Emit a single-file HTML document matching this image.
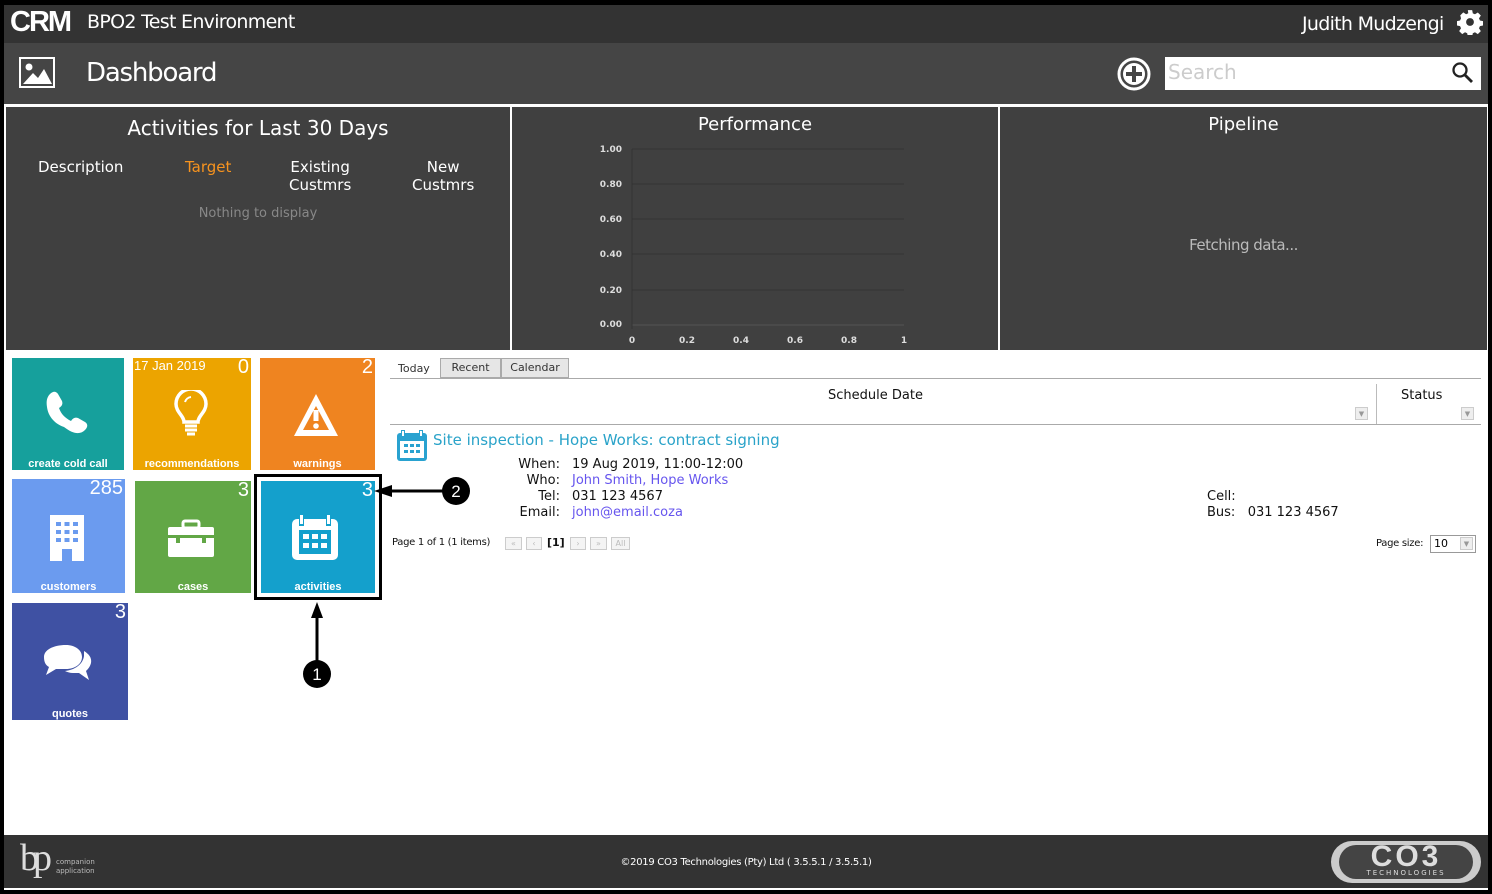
<!DOCTYPE html>
<html><head><meta charset="utf-8"><style>
*{margin:0;padding:0;box-sizing:border-box}
body{width:1492px;height:894px;background:#fff;position:relative;overflow:hidden;font-family:"DejaVu Sans","Liberation Sans",sans-serif}
.a{position:absolute}
.frame{left:0;top:0;width:1492px;height:894px;border:4px solid #000;border-top-width:5px}
.t{color:#fff;white-space:nowrap}
.tile{position:absolute;color:#fff;font-family:"Liberation Sans",sans-serif}
.tile .n{position:absolute;right:2px;top:-2px;font-size:20px}
.tile .l{position:absolute;left:0;right:0;bottom:0;text-align:center;font-size:11px;font-weight:bold}
.tile svg{position:absolute}
.yl{position:absolute;left:590px;width:32px;text-align:right;font-size:9px;color:#ddd;font-weight:bold}
.xl{position:absolute;top:335px;font-size:9px;color:#ddd;font-weight:bold;width:20px;text-align:center}
.pb{position:absolute;top:537px;height:13px;border:1px solid #ccc;background:#f4f4f4;font-size:8px;color:#bbb;text-align:center;line-height:11px}
.dd{position:absolute;width:13px;height:13px;border:1px solid #ccc;background:#eee;font-size:7px;color:#999;text-align:center;line-height:12px}
</style></head><body>
<div class="a" style="left:4px;top:5px;width:1484px;height:38px;background:#333"></div>
<div class="a t" style="left:10px;top:7px;font-family:'Liberation Sans',sans-serif;font-weight:bold;font-size:29px;letter-spacing:-2px;line-height:30px">CRM</div>
<div class="a t" style="left:87px;top:11px;font-size:19px;letter-spacing:-0.7px">BPO2 Test Environment</div>
<div class="a t" style="left:1302px;top:13px;font-size:19px;letter-spacing:-0.7px">Judith Mudzengi</div>
<svg class="a" style="left:1457px;top:9px" width="26" height="26" viewBox="0 0 24 24"><path fill="#fff" d="M10 1h4l.6 3 2 .9 2.6-1.7 2.8 2.8-1.7 2.6.9 2 3 .6v4l-3 .6-.9 2 1.7 2.6-2.8 2.8-2.6-1.7-2 .9-.6 3h-4l-.6-3-2-.9-2.6 1.7-2.8-2.8 1.7-2.6-.9-2-3-.6v-4l3-.6.9-2L3 5.9 5.8 3.1l2.6 1.7 2-.9z"/><circle cx="12" cy="12" r="3.6" fill="#333"/></svg>
<div class="a" style="left:4px;top:43px;width:1484px;height:61px;background:#454545"></div>
<div class="a" style="left:19px;top:57px;width:36px;height:31px;border:2px solid #fff"></div>
<svg class="a" style="left:21px;top:59px" width="32" height="27"><circle cx="8" cy="8" r="3.5" fill="#fff"/><path d="M2 25 L12 14 L17 19 L23 10 L31 25Z" fill="#fff"/></svg>
<div class="a t" style="left:86px;top:58px;font-size:26px;letter-spacing:-1.2px">Dashboard</div>
<svg class="a" style="left:1116px;top:56px" width="36" height="36"><circle cx="18" cy="18" r="15" fill="none" stroke="#fff" stroke-width="3"/><circle cx="18" cy="18" r="11" fill="#fff"/><rect x="16" y="10" width="4" height="16" fill="#454545"/><rect x="10" y="16" width="16" height="4" fill="#454545"/></svg>
<div class="a" style="left:1165px;top:57px;width:316px;height:33px;background:#fff"></div>
<div class="a" style="left:1168px;top:60px;font-size:20px;color:#ccc">Search</div>
<svg class="a" style="left:1451px;top:61px" width="24" height="24"><circle cx="9" cy="9" r="6.5" fill="none" stroke="#222" stroke-width="2.3"/><line x1="14" y1="14" x2="21" y2="21" stroke="#222" stroke-width="2.8"/></svg>
<div class="a" style="left:4px;top:104px;width:1484px;height:246px;background:#fff"></div>
<div class="a" style="left:6px;top:107px;width:504px;height:243px;background:#404040"></div>
<div class="a" style="left:512px;top:107px;width:486px;height:243px;background:#404040"></div>
<div class="a" style="left:1000px;top:107px;width:487px;height:243px;background:#404040"></div>
<div class="a t" style="left:6px;width:504px;text-align:center;top:116px;font-size:20px">Activities for Last 30 Days</div>
<div class="a t" style="left:38px;top:158px;font-size:15px">Description</div>
<div class="a" style="left:185px;top:158px;font-size:15px;color:#f7931e">Target</div>
<div class="a t" style="left:289px;top:158px;font-size:15px;line-height:18px;text-align:center">Existing<br>Custmrs</div>
<div class="a t" style="left:412px;top:158px;font-size:15px;line-height:18px;text-align:center">New<br>Custmrs</div>
<div class="a" style="left:6px;width:504px;text-align:center;top:206px;font-size:13px;color:#888">Nothing to display</div>
<div class="a t" style="left:512px;width:486px;text-align:center;top:114px;font-size:18px">Performance</div>
<svg class="a" style="left:512px;top:107px" width="486" height="243">
<g stroke="#333" stroke-width="1"><line x1="120" y1="42" x2="392" y2="42"/><line x1="120" y1="77" x2="392" y2="77"/><line x1="120" y1="112" x2="392" y2="112"/><line x1="120" y1="147" x2="392" y2="147"/><line x1="120" y1="183" x2="392" y2="183"/></g>
<line x1="120" y1="218" x2="392" y2="218" stroke="#555"/><line x1="120" y1="42" x2="120" y2="222" stroke="#333"/>
</svg>
<div class="yl" style="top:145px">1.00</div><div class="yl" style="top:180px">0.80</div><div class="yl" style="top:215px">0.60</div><div class="yl" style="top:250px">0.40</div><div class="yl" style="top:286px">0.20</div><div class="yl" style="top:320px">0.00</div>
<div class="xl" style="left:622px;top:336px">0</div><div class="xl" style="left:677px;top:336px">0.2</div><div class="xl" style="left:731px;top:336px">0.4</div><div class="xl" style="left:785px;top:336px">0.6</div><div class="xl" style="left:839px;top:336px">0.8</div><div class="xl" style="left:894px;top:336px">1</div>
<div class="a t" style="left:1000px;width:487px;text-align:center;top:114px;font-size:18px">Pipeline</div>
<div class="a" style="left:1000px;width:487px;text-align:center;top:236px;font-size:15px;color:#bbb;letter-spacing:-0.5px">Fetching data...</div>
<div class="tile" style="left:12px;top:358px;width:112px;height:112px;background:#16a09c">
<svg style="left:30px;top:30px" width="50" height="50" viewBox="0 0 50 50"><path fill="#fff" d="M8 6c3-3 6-3 8 0l4 7c1 3 0 5-3 7 2 6 6 10 12 13 2-3 4-4 7-3l7 4c3 2 3 5 0 8-5 5-12 4-21-3C11 35 6 27 5 19 4 13 5 9 8 6z"/></svg>
<div class="l">create cold call</div></div>
<div class="tile" style="left:133px;top:358px;width:118px;height:112px;background:#eca400">
<div class="a" style="left:1px;top:0;font-size:13px">17 Jan 2019</div><div class="n">0</div>
<svg style="left:40px;top:32px" width="36" height="48" viewBox="0 0 36 48"><path fill="none" stroke="#fff" stroke-width="3.5" d="M11 32c0-6-8-10-8-18a15 15 0 0130 0c0 8-8 12-8 18z"/><path d="M12 36h12M12 40h12M14 44h8" stroke="#fff" stroke-width="3"/><path d="M12 12a7 7 0 016-5" stroke="#fff" stroke-width="2" fill="none"/></svg>
<div class="l">recommendations</div></div>
<div class="tile" style="left:260px;top:358px;width:115px;height:112px;background:#ef8420">
<div class="n">2</div>
<svg style="left:32px;top:34px" width="48" height="46" viewBox="0 0 48 46"><path d="M24 2L46 44H2z" fill="#fff"/><path d="M24 14L37 38H11z" fill="#ef8420"/><rect x="21.5" y="18" width="5" height="11" fill="#fff"/><circle cx="24" cy="34" r="2.8" fill="#fff"/></svg>
<div class="l">warnings</div></div>
<div class="tile" style="left:12px;top:479px;width:113px;height:114px;background:#6b9bef">
<div class="n">285</div>
<svg style="left:38px;top:36px" width="34" height="46"><rect width="34" height="46" fill="#fff"/><g fill="#6b9bef"><rect x="6" y="7" width="5" height="4"/><rect x="14.5" y="7" width="5" height="4"/><rect x="23" y="7" width="5" height="4"/><rect x="6" y="15" width="5" height="4"/><rect x="14.5" y="15" width="5" height="4"/><rect x="23" y="15" width="5" height="4"/><rect x="6" y="23" width="5" height="4"/><rect x="14.5" y="23" width="5" height="4"/><rect x="23" y="23" width="5" height="4"/><rect x="12" y="34" width="10" height="12"/></g></svg>
<div class="l">customers</div></div>
<div class="tile" style="left:135px;top:481px;width:116px;height:112px;background:#62a746">
<div class="n">3</div>
<svg style="left:33px;top:38px" width="46" height="38"><rect x="15" y="2" width="16" height="7" rx="2" fill="none" stroke="#fff" stroke-width="3"/><rect x="0" y="8" width="46" height="30" rx="2" fill="#fff"/><rect x="0" y="16" width="46" height="3" fill="#62a746"/><rect x="8" y="16" width="4" height="8" fill="#62a746"/><rect x="34" y="16" width="4" height="8" fill="#62a746"/></svg>
<div class="l">cases</div></div>
<div class="tile" style="left:261px;top:481px;width:114px;height:112px;background:#14a0cc">
<div class="n">3</div>
<svg style="left:31px;top:33px" width="46" height="46"><rect x="0" y="5" width="46" height="41" rx="5" fill="#fff"/><rect x="7" y="0" width="5" height="12" fill="#14a0cc"/><rect x="34" y="0" width="5" height="12" fill="#14a0cc"/><rect x="8" y="1" width="3" height="9" fill="#fff"/><rect x="35" y="1" width="3" height="9" fill="#fff"/><rect x="7" y="16" width="32" height="24" fill="#14a0cc"/><g fill="#fff"><rect x="11" y="20" width="6" height="5"/><rect x="20" y="20" width="6" height="5"/><rect x="29" y="20" width="6" height="5"/><rect x="11" y="29" width="6" height="5"/><rect x="20" y="29" width="6" height="5"/><rect x="29" y="29" width="6" height="5"/></g></svg>
<div class="l">activities</div></div>
<div class="a" style="left:254px;top:474px;width:128px;height:126px;border:3px solid #000"></div>
<div class="tile" style="left:12px;top:603px;width:116px;height:117px;background:#3f51a3">
<div class="n">3</div>
<svg style="left:28px;top:36px" width="54" height="46"><path d="M26 6c9 0 16 5 16 12s-7 12-16 12l2 0-12 0-10 6 3-8C5 26 4 22 4 18 4 11 13 6 26 6z" fill="#fff"/><path d="M44 12c5 3 8 7 7 12-1 4-3 6-5 8l3 9-10-7-6 0c-3 0-6-1-8-2 10-1 18-7 19-15z" fill="#fff"/></svg>
<div class="l">quotes</div></div>
<svg class="a" style="left:290px;top:470px" width="200" height="220">
<line x1="27" y1="145" x2="27" y2="200" stroke="#000" stroke-width="3"/>
<path d="M27 132 L21 148 L33 148Z" fill="#000"/>
<circle cx="27" cy="204" r="14" fill="#000"/>
<text x="27" y="210" fill="#fff" font-size="17" text-anchor="middle" font-family="Liberation Sans">1</text>
<line x1="100" y1="21" x2="155" y2="21" stroke="#000" stroke-width="3"/>
<path d="M84 21 L102 15 L102 27Z" fill="#000"/>
<circle cx="166" cy="21" r="14" fill="#000"/>
<text x="166" y="27" fill="#fff" font-size="17" text-anchor="middle" font-family="Liberation Sans">2</text>
</svg>
<div class="a" style="left:398px;top:362px;font-size:11px;color:#333">Today</div>
<div class="a" style="left:440px;top:358px;width:61px;height:20px;background:#e6e6e6;border:1px solid #aaa;font-size:11px;color:#333;text-align:center;line-height:18px">Recent</div>
<div class="a" style="left:501px;top:358px;width:68px;height:20px;background:#e6e6e6;border:1px solid #aaa;font-size:11px;color:#333;text-align:center;line-height:18px">Calendar</div>
<div class="a" style="left:390px;top:378px;width:1091px;height:1px;background:#aaa"></div>
<div class="a" style="left:828px;top:388px;font-size:13px;color:#111">Schedule Date</div>
<div class="a" style="left:1401px;top:388px;font-size:13px;color:#111">Status</div>
<div class="a" style="left:1376px;top:384px;width:1px;height:40px;background:#bbb"></div>
<div class="dd" style="left:1355px;top:407px">▼</div>
<div class="dd" style="left:1461px;top:407px">▼</div>
<div class="a" style="left:390px;top:424px;width:1091px;height:1px;background:#aaa"></div>
<svg class="a" style="left:397px;top:430px" width="30" height="31"><rect x="0" y="3" width="30" height="28" rx="3" fill="#29a2d0"/><rect x="4" y="0" width="4" height="8" fill="#29a2d0"/><rect x="22" y="0" width="4" height="8" fill="#29a2d0"/><rect x="5" y="1" width="2" height="5" fill="#fff"/><rect x="23" y="1" width="2" height="5" fill="#fff"/><rect x="3" y="11" width="24" height="17" fill="#fff"/><g fill="#29a2d0"><rect x="7" y="14" width="4" height="3"/><rect x="13" y="14" width="4" height="3"/><rect x="19" y="14" width="4" height="3"/><rect x="7" y="20" width="4" height="3"/><rect x="13" y="20" width="4" height="3"/><rect x="19" y="20" width="4" height="3"/></g></svg>
<div class="a" style="left:433px;top:431px;font-size:15px;color:#2aa3c9">Site inspection - Hope Works: contract signing</div>
<div class="a" style="left:500px;top:457px;width:60px;text-align:right;font-size:13px;line-height:16px;color:#111">When:<br>Who:<br>Tel:<br>Email:</div>
<div class="a" style="left:572px;top:457px;font-size:13px;line-height:16px;color:#111">19 Aug 2019, 11:00-12:00<br><span style="color:#6655ee">John Smith, Hope Works</span><br>031 123 4567<br><span style="color:#6655ee">john@email.coza</span></div>
<div class="a" style="left:1207px;top:489px;font-size:13px;line-height:16px;color:#111">Cell:<br>Bus:&nbsp;&nbsp; 031 123 4567</div>
<div class="a" style="left:392px;top:537px;font-size:10px;color:#111;letter-spacing:-0.3px">Page 1 of 1 (1 items)</div>
<div class="pb" style="left:505px;width:17px">«</div><div class="pb" style="left:526px;width:16px">‹</div>
<div class="a" style="left:547px;top:536px;font-size:11px;font-weight:bold;color:#111">[1]</div>
<div class="pb" style="left:570px;width:16px">›</div><div class="pb" style="left:590px;width:17px">»</div><div class="pb" style="left:611px;width:19px">All</div>
<div class="a" style="left:1376px;top:538px;font-size:10px;color:#111;letter-spacing:-0.3px">Page size:</div>
<div class="a" style="left:1430px;top:535px;width:46px;height:18px;border:1px solid #999;font-size:11px;padding-left:3px;line-height:16px">10</div>
<div class="dd" style="left:1460px;top:537px">▼</div>
<div class="a" style="left:4px;top:835px;width:1484px;height:53px;background:#333"></div>
<div class="a" style="left:20px;top:838px;font-family:'Liberation Serif',serif;font-size:38px;color:#ddd;letter-spacing:-6px;line-height:40px">bp</div>
<div class="a" style="left:56px;top:858px;font-size:7px;color:#bbb;line-height:9px">companion<br>application</div>
<div class="a" style="left:0;width:1492px;text-align:center;top:857px;font-size:10px;color:#fff;letter-spacing:-0.3px">©2019 CO3 Technologies (Pty) Ltd ( 3.5.5.1 / 3.5.5.1)</div>
<div class="a" style="left:1331px;top:841px;width:150px;height:42px;border-radius:21px;background:#ccc"></div>
<div class="a" style="left:1339px;top:845px;width:134px;height:34px;border-radius:17px;background:#444"></div>
<div class="a" style="left:1340px;top:839px;width:132px;text-align:center;font-family:'Liberation Sans',sans-serif;font-weight:bold;font-size:30px;color:#ddd;letter-spacing:3px;line-height:36px">CO3</div>
<div class="a" style="left:1340px;top:869px;width:132px;text-align:center;font-size:7px;color:#ddd;letter-spacing:2px">TECHNOLOGIES</div>
<div class="a frame"></div>
</body></html>
